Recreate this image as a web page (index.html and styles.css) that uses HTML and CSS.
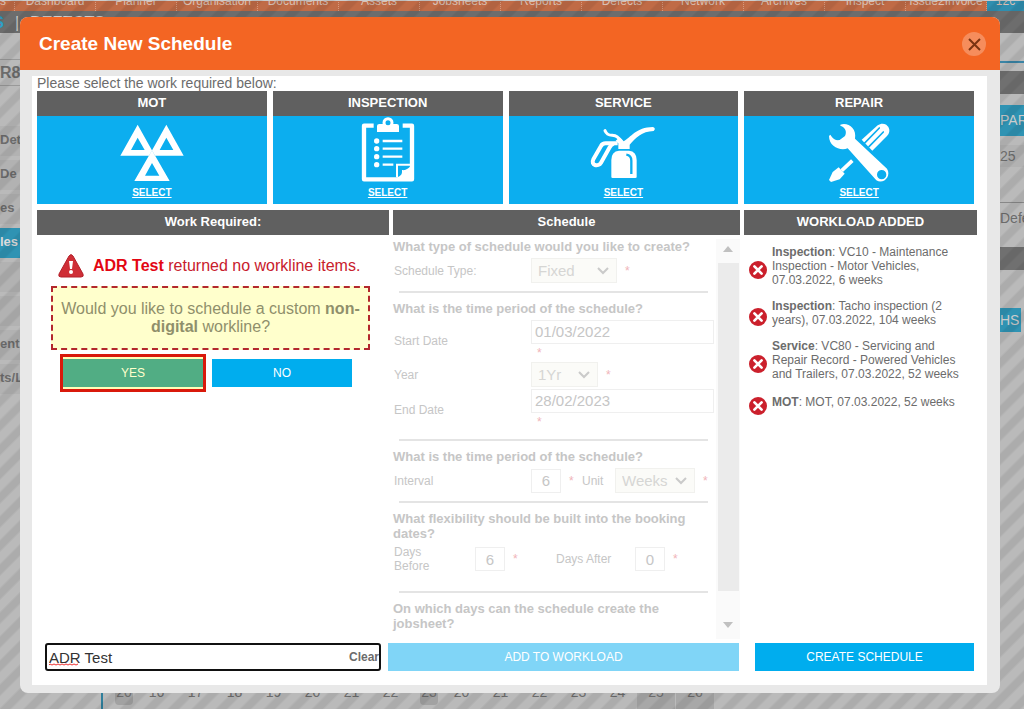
FILE: index.html
```
<!DOCTYPE html>
<html lang="en">
<head>
    <meta charset="UTF-8">
    <meta name="viewport" content="width=device-width, initial-scale=1.0">
    <title>Create New Schedule</title>
    <link rel="stylesheet" href="styles.css">
</head>
<body>
    <!-- page behind the dialog -->
    <div class="page">
        <div class="topnav">
            <span class="first">s</span><span>Dashboard</span><span>Planner</span><span>Organisation</span><span>Documents</span><span>Assets</span><span>Jobsheets</span><span>Reports</span><span>Defects</span><span>Network</span><span>Archives</span><span>Inspect</span><span>Issue2Invoice</span><span class="current">12c</span>
        </div>
        <div class="crumbs"><b>S</b><i>|</i>DEFECTS</div>
        <div class="columns">
            <div class="side">
                <div class="reg">R8</div>
                <div class="side-item">Det</div>
                <div class="side-item">De</div>
                <div class="side-item">es</div>
                <div class="side-item active">les</div>
                <div class="side-item"></div>
                <div class="side-item"></div>
                <div class="side-item">ent I</div>
                <div class="side-item">ts/L</div>
            </div>
            <div class="calendar">
                <span class="week">20</span><span>16</span><span>17</span><span>18</span><span>19</span><span>20</span><span>21</span><span>22</span><span class="week">23</span><span>20</span><span>21</span><span>22</span><span>23</span><span>24</span><span class="weekend">25</span><span class="weekend">26</span>
            </div>
            <div class="edge">
                <div class="edge-line"></div>
                <div class="edge-dark"></div>
                <div class="edge-blue">PAR</div>
                <div class="edge-text">25</div>
                <div class="edge-text defec">Defec</div>
                <div class="edge-dark low"></div>
                <div class="edge-blue low">HS</div>
            </div>
        </div>
    </div>
    <div class="overlay"></div>

    <div class="modal" role="dialog" aria-labelledby="modal_title">
        <div class="modal-header">
            <h1 id="modal_title">Create New Schedule</h1>
            <button type="button" class="close" aria-label="Close">
                <svg viewBox="0 0 24 24"><path d="M7 7l11 11M18 7L7 18"/></svg>
            </button>
        </div>
        <div class="modal-body">
            <p class="intro">Please select the work required below:</p>

            <div class="cards">
                <div class="card">
                    <h2>MOT</h2>
                    <div class="card-body">
                        <svg viewBox="0 0 192 192">
                            <path fill="#fff" fill-rule="evenodd" d="M53 20L105 113H1zM53 59L33 96H74zM139 20L191 113H87zM139 59L119 96H160zM96 97L149 189H43zM96 135L75 173H118z"/>
                        </svg>
                        <a href="#">SELECT</a>
                    </div>
                </div>
                <div class="card">
                    <h2>INSPECTION</h2>
                    <div class="card-body">
                        <svg viewBox="0 0 192 192">
                            <path fill="none" stroke="#fff" stroke-width="13" stroke-linejoin="round" d="M53 23H24V184H168V23H140"/>
                            <path fill="#fff" d="M63 42V24Q63 18 70 18H82L96 26L110 18H122Q129 18 129 24V42z"/>
                            <circle cx="96" cy="14" r="12" fill="#0caeef" stroke="#fff" stroke-width="9"/>
                            <path fill="#fff" d="M72 27H120V42H72z"/>
                            <g fill="#fff"><circle cx="62" cy="69" r="8"/><circle cx="62" cy="92" r="8"/><circle cx="62" cy="116" r="8"/><circle cx="62" cy="140" r="8"/></g>
                            <path stroke="#fff" stroke-width="7" d="M80 69H139M80 92H139M80 116H139M80 140H112"/>
                            <path fill="none" stroke="#fff" stroke-width="6" d="M164 140H123V178"/>
                            <path fill="#fff" d="M124 178C140 172 138 162 138 156C148 158 160 152 168 138V186H124z"/>
                        </svg>
                        <a href="#">SELECT</a>
                    </div>
                </div>
                <div class="card">
                    <h2>SERVICE</h2>
                    <div class="card-body">
                        <svg viewBox="0 0 192 192">
                            <path fill="#fff" d="M61 177V126Q61 100 84 98H114Q137 100 137 126V177Q137 180 133 180H65Q61 180 61 177z"/>
                            <path fill="none" stroke="#0caeef" stroke-width="7" d="M106 110Q121 112 121 128V168"/>
                            <path fill="#fff" d="M82 93V76L74 68L86 58L98 70C120 58 134 28 186 27Q196 31 188 39C152 40 134 60 116 80V93z"/>
                            <path fill="none" stroke="#fff" stroke-width="9" stroke-linecap="round" d="M42 38C50 58 66 48 78 56L90 68"/>
                            <path fill="none" stroke="#fff" stroke-width="12" stroke-linejoin="round" d="M80 76H44Q34 76 30 84L7 124C-2 142 22 148 30 134L56 88Q60 80 68 77"/>
                        </svg>
                        <a href="#">SELECT</a>
                    </div>
                </div>
                <div class="card">
                    <h2>REPAIR</h2>
                    <div class="card-body">
                        <svg viewBox="0 0 192 192">
                            <path fill="#fff" d="M104 65L152 22C174 6 200 32 180 54L136 98z"/>
                            <path stroke="#0caeef" stroke-width="5" stroke-linecap="round" d="M112 76L157 30M126 86L169 42"/>
                            <path stroke="#fff" stroke-width="11" d="M76 128L44 158"/>
                            <path fill="#fff" d="M35 148L53 167L38 184L12 192L6 186L17 162z"/>
                            <path fill="#fff" fill-rule="evenodd" d="M40 20C62 12 90 30 84 62L180 152C194 174 170 200 148 187L62 91C40 100 6 86 6 54L10 50C18 64 28 68 38 66L54 54C60 42 56 28 40 23zM164 156A14 14 0 1 0 164 184A14 14 0 1 0 164 156z"/>
                        </svg>
                        <a href="#">SELECT</a>
                    </div>
                </div>
            </div>

            <div class="panels">
                <div class="panel">
                    <h2>Work Required:</h2>
                    <div class="work">
                        <div class="warning">
                            <svg viewBox="0 0 26 24"><path fill="#cf2e36" stroke="#b3202a" stroke-linejoin="round" d="M11 2Q13-1 15 2L25 20Q26 23 23 23H3Q0 23 1 20z"/><path fill="#fff" d="M11 7h4l-1 8h-2z"/><circle cx="13" cy="18" r="2" fill="#fff"/></svg>
                            <p><b>ADR Test</b> returned no workline items.</p>
                        </div>
                        <div class="question">Would you like to schedule a custom <b>non-digital</b> workline?</div>
                        <div class="answers">
                            <div class="picked"><button type="button" class="btn green">YES</button></div>
                            <button type="button" class="btn no">NO</button>
                        </div>
                    </div>
                </div>

                <div class="panel">
                    <h2>Schedule</h2>
                    <div class="schedule">
                        <form class="fields">
                            <fieldset>
                                <legend>What type of schedule would you like to create?</legend>
                                <div class="row">
                                    <label for="type">Schedule Type:</label>
                                    <span class="drop type"><select id="type"><option>Fixed</option></select><svg viewBox="0 0 12 8"><path d="M1 1l5 5 5-5"/></svg></span>
                                    <em>*</em>
                                </div>
                            </fieldset>
                            <fieldset>
                                <legend>What is the time period of the schedule?</legend>
                                <div class="row date">
                                    <label for="start">Start Date</label>
                                    <div class="date-field"><input type="text" id="start" value="01/03/2022"><em>*</em></div>
                                </div>
                                <div class="row">
                                    <label for="year">Year</label>
                                    <span class="drop year"><select id="year"><option>1Yr</option></select><svg viewBox="0 0 12 8"><path d="M1 1l5 5 5-5"/></svg></span>
                                    <em>*</em>
                                </div>
                                <div class="row date">
                                    <label for="end">End Date</label>
                                    <div class="date-field"><input type="text" id="end" value="28/02/2023"><em>*</em></div>
                                </div>
                            </fieldset>
                            <fieldset>
                                <legend>What is the time period of the schedule?</legend>
                                <div class="row">
                                    <label for="interval">Interval</label>
                                    <input type="text" class="num" id="interval" value="6">
                                    <em>*</em>
                                    <label for="unit" class="unit-label">Unit</label>
                                    <span class="drop unit"><select id="unit"><option>Weeks</option></select><svg viewBox="0 0 12 8"><path d="M1 1l5 5 5-5"/></svg></span>
                                    <em>*</em>
                                </div>
                            </fieldset>
                            <fieldset>
                                <legend>What flexibility should be built into the booking dates?</legend>
                                <div class="row days">
                                    <label for="before" class="before-label">Days Before</label>
                                    <input type="text" class="num" id="before" value="6">
                                    <em>*</em>
                                    <label for="after" class="after-label">Days After</label>
                                    <input type="text" class="num" id="after" value="0">
                                    <em>*</em>
                                </div>
                            </fieldset>
                            <fieldset>
                                <legend>On which days can the schedule create the jobsheet?</legend>
                            </fieldset>
                        </form>
                        <div class="scrollbar">
                            <svg viewBox="0 0 10 6"><path d="M0 6L5 0l5 6z"/></svg>
                            <div class="thumb"></div>
                            <svg viewBox="0 0 10 6"><path d="M0 0h10L5 6z"/></svg>
                        </div>
                    </div>
                </div>

                <div class="panel">
                    <h2>WORKLOAD ADDED</h2>
                    <ul class="workload">
                        <li>
                            <button type="button" aria-label="Remove"><svg viewBox="0 0 20 20"><circle cx="10" cy="10" r="10"/><path d="M6 6l8 8M14 6l-8 8"/></svg></button>
                            <p><b>Inspection</b>: VC10 - Maintenance Inspection - Motor Vehicles, 07.03.2022, 6 weeks</p>
                        </li>
                        <li>
                            <button type="button" aria-label="Remove"><svg viewBox="0 0 20 20"><circle cx="10" cy="10" r="10"/><path d="M6 6l8 8M14 6l-8 8"/></svg></button>
                            <p><b>Inspection</b>: Tacho inspection (2 years), 07.03.2022, 104 weeks</p>
                        </li>
                        <li>
                            <button type="button" aria-label="Remove"><svg viewBox="0 0 20 20"><circle cx="10" cy="10" r="10"/><path d="M6 6l8 8M14 6l-8 8"/></svg></button>
                            <p><b>Service</b>: VC80 - Servicing and Repair Record - Powered Vehicles and Trailers, 07.03.2022, 52 weeks</p>
                        </li>
                        <li>
                            <button type="button" aria-label="Remove"><svg viewBox="0 0 20 20"><circle cx="10" cy="10" r="10"/><path d="M6 6l8 8M14 6l-8 8"/></svg></button>
                            <p><b>MOT</b>: MOT, 07.03.2022, 52 weeks</p>
                        </li>
                    </ul>
                </div>
            </div>

            <div class="actions">
                <div class="search">
                    <div class="search-box">
                        <input type="text" value="ADR Test" aria-label="Search work">
                        <svg viewBox="0 0 30 3"><path d="M0 2l1-1 2 1 2-1 2 1 2-1 2 1 2-1 2 1 2-1 2 1 2-1 2 1 2-1 2 1 2-1"/></svg>
                    </div>
                    <button type="button">Clear</button>
                </div>
                <button type="button" class="btn add" disabled>ADD TO WORKLOAD</button>
                <button type="button" class="btn create">CREATE SCHEDULE</button>
            </div>
        </div>
    </div>
</body>
</html>
```
FILE: styles.css
```
*{
    margin: 0;
    padding: 0;
    box-sizing: border-box;
    list-style: none;
}
body{
    height: 100vh;
    overflow: hidden;
    font-family: "Liberation Sans", Arial, sans-serif;
    font-size: 13px;
    color: #6c6c6c;
}
button, input, select{
    font-family: inherit;
    font-size: inherit;
    color: inherit;
    border: 0;
    background: none;
}
svg{
    display: block;
}

/* page behind the dialog */
.page{
    height: 100vh;
    display: flex;
    flex-direction: column;
    background-color: #bababa;
}
.topnav{
    height: 11px;
    flex: none;
    display: flex;
    align-items: flex-end;
    background-color: #c06b46;
    border-top: 1px solid #ccc;
    overflow: hidden;
}
.topnav span{
    flex: 0 0 81px;
    border-right: 1px dotted #d79a7e;
    padding-bottom: 3px;
    font-size: 12px;
    line-height: 14px;
    text-align: center;
    color: #d9c0b4;
}
.topnav .first{
    flex: 0 0 15px;
    text-align: left;
}
.topnav .current{
    flex: 1;
    background-color: #2f8fb0;
    border: 0;
}
.crumbs{
    height: 22px;
    flex: none;
    padding-top: 2px;
    background-color: #6d6d6d;
    color: #ccc;
    font-size: 16px;
    line-height: 19px;
    font-weight: bold;
    display: flex;
    gap: 11px;
    overflow: hidden;
}
.crumbs b{
    width: 4px;
    direction: rtl;
    color: #2f9fc8;
}
.crumbs i{
    font-style: normal;
    font-weight: normal;
}
.columns{
    flex: 1;
    display: flex;
}
.side{
    flex: 0 0 101px;
    padding-top: 26px;
    font-weight: bold;
}
.reg{
    height: 27px;
    margin-bottom: 40px;
    line-height: 26px;
    font-size: 16px;
    border-top: 1px solid #999;
    border-bottom: 1px solid #999;
}
.side-item{
    height: 30px;
    margin-bottom: 4px;
    line-height: 28px;
    background-color: #b2b2b2;
}
.side-item.active{
    background-color: #2f93b3;
    color: #ddd;
}
.calendar{
    flex: 1;
    align-self: flex-end;
    display: flex;
    height: 32px;
    line-height: 30px;
    font-size: 14px;
    text-align: center;
    padding-left: 2px;
    border-left: 2px solid #2f7f9c;
}
.calendar span{
    flex: 0 0 39px;
}
.calendar .week{
    background-color: #a2a2a2;
    border-radius: 4px;
    height: 28px;
    flex: 0 0 18px;
    margin: 0 4px 0 10px;
}
.calendar .weekend{
    background-color: #a8a8a8;
    border-right: 1px solid #bbb;
}
.edge{
    flex: 0 0 24px;
    overflow: hidden;
    font-size: 14px;
}
.edge-line{
    height: 30px;
    border-bottom: 2px solid #3a84a5;
}
.edge-dark{
    height: 23px;
    margin-top: 8px;
    background-color: #707070;
}
.edge-dark.low{
    margin-top: 14px;
}
.edge-blue{
    height: 31px;
    margin-top: 11px;
    line-height: 31px;
    color: #ccc;
    background-color: #2f93b3;
}
.edge-blue.low{
    width: 21px;
    height: 24px;
    margin-top: 38px;
    line-height: 24px;
}
.edge-text{
    height: 22px;
    margin-top: 9px;
    line-height: 22px;
    background-color: #b2b2b2;
}
.edge-text.defec{
    height: 31px;
    margin-top: 35px;
    line-height: 31px;
    border-top: 1px solid #888;
    background: none;
}
.overlay{
    position: fixed;
    inset: 0;
    background: repeating-linear-gradient(135deg, transparent 0 7px, rgba(0, 0, 0, .07) 9px 15px, transparent 17px);
}

/* dialog */
.modal{
    position: fixed;
    inset: 17px 24px 16px 20px;
    display: flex;
    flex-direction: column;
    border-radius: 8px;
    overflow: hidden;
    background-color: #e8e8e8;
}
.modal-header{
    height: 53px;
    flex: none;
    display: flex;
    align-items: center;
    justify-content: space-between;
    padding: 0 14px 0 19px;
    background-color: #f36523;
}
.modal-header h1{
    font-size: 19px;
    color: #fff;
}
.close{
    width: 24px;
    height: 24px;
    border-radius: 50%;
    background-color: #f68d5c;
}
.close path{
    stroke: #7a3312;
    stroke-width: 2;
    fill: none;
}
.modal-body{
    flex: 1;
    display: flex;
    flex-direction: column;
    margin: 6px 13px 8px 12px;
    padding: 0 10px 14px 5px;
    background-color: #fff;
}
.intro{
    line-height: 15px;
    font-size: 14px;
}
.modal-body h2{
    height: 25px;
    line-height: 24px;
    font-size: 13px;
    text-align: center;
    color: #fff;
    background-color: #606060;
}
.cards{
    display: grid;
    grid-template-columns: repeat(4, 1fr);
    gap: 6px;
    padding-right: 3px;
    margin-bottom: 6px;
}
.card-body{
    height: 88px;
    padding-top: 2px;
    display: flex;
    flex-direction: column;
    align-items: center;
    background-color: #0caeef;
}
.card-body svg{
    width: 64px;
    height: 64px;
    overflow: visible;
}
.card-body a{
    margin-top: 4px;
    line-height: 14px;
    font-size: 10px;
    font-weight: bold;
    color: #fff;
}
.panels{
    flex: 1;
    display: grid;
    grid-template-columns: 352fr 347fr 233fr;
    gap: 4px;
    min-height: 0;
}
.btn{
    height: 28px;
    font-size: 12px;
    color: #fff;
    background-color: #00adee;
}

/* work required */
.work{
    padding: 18px 19px 0 14px;
}
.warning{
    display: flex;
    align-items: center;
    gap: 9px;
    padding-left: 7px;
    margin-bottom: 7px;
    font-size: 16px;
    color: #c8202c;
}
.warning svg{
    width: 26px;
    height: 26px;
    flex: none;
}
.warning b{
    color: #e30613;
}
.question{
    padding: 12px 4px;
    border: 2px dashed #b3282d;
    background-color: #ffffcc;
    font-size: 16px;
    line-height: 18px;
    text-align: center;
    color: #8f8f6b;
}
.answers{
    display: flex;
    align-items: center;
    gap: 6px;
    padding: 4px 18px 0 9px;
}
.picked{
    flex: 1;
    padding: 2px 0;
    border: 3px solid #d9190b;
    background-color: #ffffb8;
}
.btn.green{
    display: block;
    width: 100%;
    background-color: #51ad84;
    color: #ffffcc;
}
.btn.no{
    flex: 1;
}

/* schedule form, greyed out */
.schedule{
    display: flex;
    gap: 2px;
    padding-top: 4px;
    color: #c6c6c6;
}
.fields{
    flex: 1;
}
fieldset{
    border: 0;
}
fieldset + fieldset::before{
    content: "";
    display: block;
    height: 2px;
    margin: 8px 6px;
    background-color: #e4e4e4;
}
legend{
    float: left;
    width: 100%;
    margin-bottom: 4px;
    font-weight: bold;
    line-height: 15px;
}
.row{
    clear: both;
    display: flex;
    align-items: center;
    gap: 8px;
    min-height: 25px;
    line-height: 14px;
}
.row + .date{
    margin-top: 2px;
}
.row label{
    flex: 0 0 130px;
    padding-left: 1px;
    font-size: 12px;
}
.row em{
    width: 4px;
    font-style: normal;
    font-size: 12px;
    color: #f0b4b8;
}
.fields input{
    height: 24px;
    border: 1px solid #efefef;
    font-size: 15px;
}
.date-field{
    flex: 1;
    display: flex;
    flex-direction: column;
}
.date-field input{
    width: 100%;
    padding: 0 0 2px 3px;
}
.date-field em{
    margin-left: 6px;
    line-height: 18px;
}
.fields .num{
    width: 30px;
    text-align: center;
}
.drop{
    position: relative;
}
.drop select{
    width: 100%;
    height: 25px;
    padding-left: 6px;
    appearance: none;
    border: 1px solid #f1f1ee;
    background-color: #fbfbf8;
    font-size: 15px;
    color: #d6d6d4;
}
.drop svg{
    position: absolute;
    right: 8px;
    top: 9px;
    width: 12px;
    height: 8px;
    fill: none;
    stroke: #cacaca;
    stroke-width: 2;
}
.type{
    width: 86px;
}
.year{
    width: 67px;
}
.unit{
    width: 80px;
}
.row .unit-label{
    flex: 0 0 26px;
}
.row.days{
    margin-bottom: 10px;
}
.row .before-label{
    flex: 0 0 74px;
    padding-right: 30px;
}
.row .after-label{
    flex: 0 0 72px;
    margin-left: 30px;
}
.scrollbar{
    width: 24px;
    height: 400px;
    display: flex;
    flex-direction: column;
    align-items: center;
    background-color: #fafafa;
}
.scrollbar svg{
    width: 10px;
    height: 6px;
    flex: none;
    margin: 7px 0 11px;
    fill: #c0c0c0;
}
.scrollbar .thumb{
    width: 21px;
    flex: 1;
    margin-bottom: 24px;
    background-color: #ebebeb;
}

/* workload */
.workload{
    padding: 10px 4px 0 5px;
}
.workload li{
    display: flex;
    align-items: center;
    gap: 5px;
    margin-bottom: 12px;
    font-size: 12px;
    line-height: 14px;
}
.workload button{
    flex: none;
    width: 18px;
    height: 18px;
    margin: 4px 0 -4px;
}
.workload circle{
    fill: #cb202c;
}
.workload path{
    stroke: #fff;
    stroke-width: 3;
    stroke-linecap: round;
}

/* bottom row */
.actions{
    display: flex;
    padding: 0 3px 0 8px;
}
.search{
    flex: 332;
    height: 28px;
    display: flex;
    align-items: center;
    border: 2px solid #111;
    border-radius: 3px;
    overflow: hidden;
}
.search-box{
    flex: 1;
    position: relative;
}
.search input{
    width: 100%;
    padding-left: 2px;
    font-size: 15px;
    color: #333;
    outline: 0;
}
.search svg{
    position: absolute;
    left: 2px;
    bottom: 0;
    width: 30px;
    height: 3px;
    fill: none;
    stroke: #e33;
}
.search button{
    font-size: 12px;
    font-weight: bold;
}
.add{
    flex: 351;
    margin: 0 16px 0 7px;
    background-color: #80d5f7;
}
.create{
    flex: 219;
}
```
